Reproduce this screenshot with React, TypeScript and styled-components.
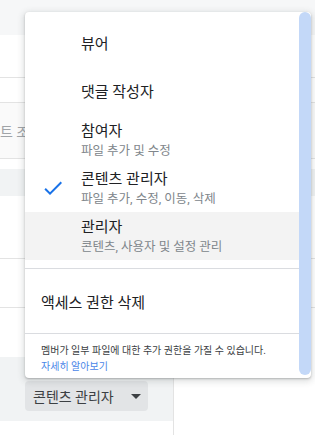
import React from 'react';
import styled, { createGlobalStyle } from 'styled-components';

const GlobalStyle = createGlobalStyle`
  html, body {
    margin: 0;
    padding: 0;
    background: #ffffff;
  }
  body {
    font-family: Roboto, "Noto Sans CJK KR", "Noto Sans", sans-serif;
    color: #202124;
    width: 315px;
    height: 435px;
    overflow: hidden;
  }
`;

const Page = styled.div`
  position: relative;
  width: 315px;
  height: 435px;
  display: flex;
  flex-direction: column;
  overflow: hidden;
`;

const TopBand = styled.div`
  height: 35px;
  flex: none;
  background: #f6f7f8;
`;

const Row = styled.div<{ $h: number; $tone?: string; $line?: boolean }>`
  height: ${(p) => p.$h}px;
  flex: none;
  box-sizing: border-box;
  background: ${(p) => p.$tone || '#ffffff'};
  border-bottom: ${(p) => (p.$line ? '1px solid #e3e3e3' : 'none')};
  display: flex;
  align-items: center;
  overflow: hidden;
`;

const FaintText = styled.span`
  font-size: 14px;
  color: #a0a4a8;
  padding-left: 0;
  white-space: nowrap;
`;

const BottomBand = styled.div`
  display: flex;
  flex: 1;
`;

const BottomLeft = styled.div`
  width: 173px;
  border-right: 1px solid #e3e3e3;
  display: flex;
  flex-direction: column;
`;

const GreyBar = styled.div`
  height: 64px;
  background: #f1f3f4;
  padding: 24px 0 0 25px;
  box-sizing: border-box;
`;

const RoleButton = styled.div`
  width: 123px;
  height: 30px;
  box-sizing: border-box;
  border-radius: 4px;
  background: #e2e4e6;
  display: flex;
  align-items: center;
  padding-left: 8px;
  gap: 8px;
  font-size: 14px;
  color: #3c4043;
`;

const Menu = styled.div`
  position: absolute;
  left: 25px;
  top: 12px;
  width: 286px;
  height: 366px;
  background: #ffffff;
  border-radius: 4px;
  box-shadow: 0 2px 6px 2px rgba(60, 64, 67, 0.15), 0 1px 2px rgba(60, 64, 67, 0.3);
  display: flex;
  overflow: hidden;
`;

const MenuBody = styled.div`
  flex: 1;
  display: flex;
  flex-direction: column;
  padding-top: 8px;
`;

const ScrollTrack = styled.div`
  width: 12px;
  flex: none;
  padding-bottom: 3px;
`;

const ScrollThumb = styled.div`
  height: 100%;
  border-radius: 6px;
  background: #c3d8f8;
`;

const Item = styled.div<{ $active?: boolean }>`
  height: 48px;
  flex: none;
  display: flex;
  align-items: center;
  background: ${(p) => (p.$active ? '#f3f3f3' : 'transparent')};
`;

const IconSlot = styled.div`
  width: 56px;
  flex: none;
  display: flex;
  align-items: center;
  padding-left: 16px;
  box-sizing: border-box;
`;

const Texts = styled.div`
  display: flex;
  flex-direction: column;
`;

const Title = styled.span`
  font-size: 15px;
  line-height: 22px;
  color: #202124;
  white-space: nowrap;
`;

const Sub = styled.span`
  font-size: 12.5px;
  line-height: 18px;
  color: #80868b;
  white-space: nowrap;
`;

const Divider = styled.div`
  height: 1px;
  flex: none;
  background: #dadce0;
  margin: 8px 0;
`;

const PlainItem = styled.div`
  height: 48px;
  flex: none;
  display: flex;
  align-items: center;
  padding-left: 16px;
  font-size: 15px;
  color: #202124;
`;

const Footer = styled.div`
  padding: 1px 16px 0;
  font-size: 10px;
  line-height: 16px;
  color: #3c4043;
  white-space: nowrap;
`;

const Link = styled.a`
  display: block;
  color: #4a86e8;
  text-decoration: none;
`;

const Check = () => (
  <svg width="24" height="24" viewBox="0 0 24 24">
    <path d="M9 16.17L4.83 12l-1.42 1.41L9 19 21 7l-1.41-1.41z" fill="#1a73e8" />
  </svg>
);

const Caret = () => (
  <svg width="24" height="24" viewBox="0 0 24 24" style={{ marginLeft: 2 }}>
    <path d="M7 10l5 5 5-5z" fill="#3c4043" />
  </svg>
);

type Role = { title: string; sub?: string; checked?: boolean; active?: boolean };

const roles: Role[] = [
  { title: '뷰어' },
  { title: '댓글 작성자' },
  { title: '참여자', sub: '파일 추가 및 수정' },
  { title: '콘텐츠 관리자', sub: '파일 추가, 수정, 이동, 삭제', checked: true },
  { title: '관리자', sub: '콘텐츠, 사용자 및 설정 관리', active: true },
];

export default function App() {
  return (
    <>
      <GlobalStyle />
      <Page>
        <TopBand />
        <Row $h={43} $line />
        <Row $h={25} $line />
        <Row $h={56} $tone="#fafafa" $line>
          <FaintText>트 조회</FaintText>
        </Row>
        <Row $h={10} />
        <Row $h={27} $tone="#f1f3f4" />
        <Row $h={63} $line />
        <Row $h={49} $line />
        <Row $h={49} />
        <BottomBand>
          <BottomLeft>
            <GreyBar>
              <RoleButton>
                콘텐츠 관리자
                <Caret />
              </RoleButton>
            </GreyBar>
          </BottomLeft>
        </BottomBand>

        <Menu>
          <MenuBody>
            {roles.map((r) => (
              <Item key={r.title} $active={r.active}>
                <IconSlot>{r.checked && <Check />}</IconSlot>
                <Texts>
                  <Title>{r.title}</Title>
                  {r.sub && <Sub>{r.sub}</Sub>}
                </Texts>
              </Item>
            ))}
            <Divider />
            <PlainItem>액세스 권한 삭제</PlainItem>
            <Divider />
            <Footer>
              멤버가 일부 파일에 대한 추가 권한을 가질 수 있습니다.
              <Link>자세히 알아보기</Link>
            </Footer>
          </MenuBody>
          <ScrollTrack>
            <ScrollThumb />
          </ScrollTrack>
        </Menu>
      </Page>
    </>
  );
}
